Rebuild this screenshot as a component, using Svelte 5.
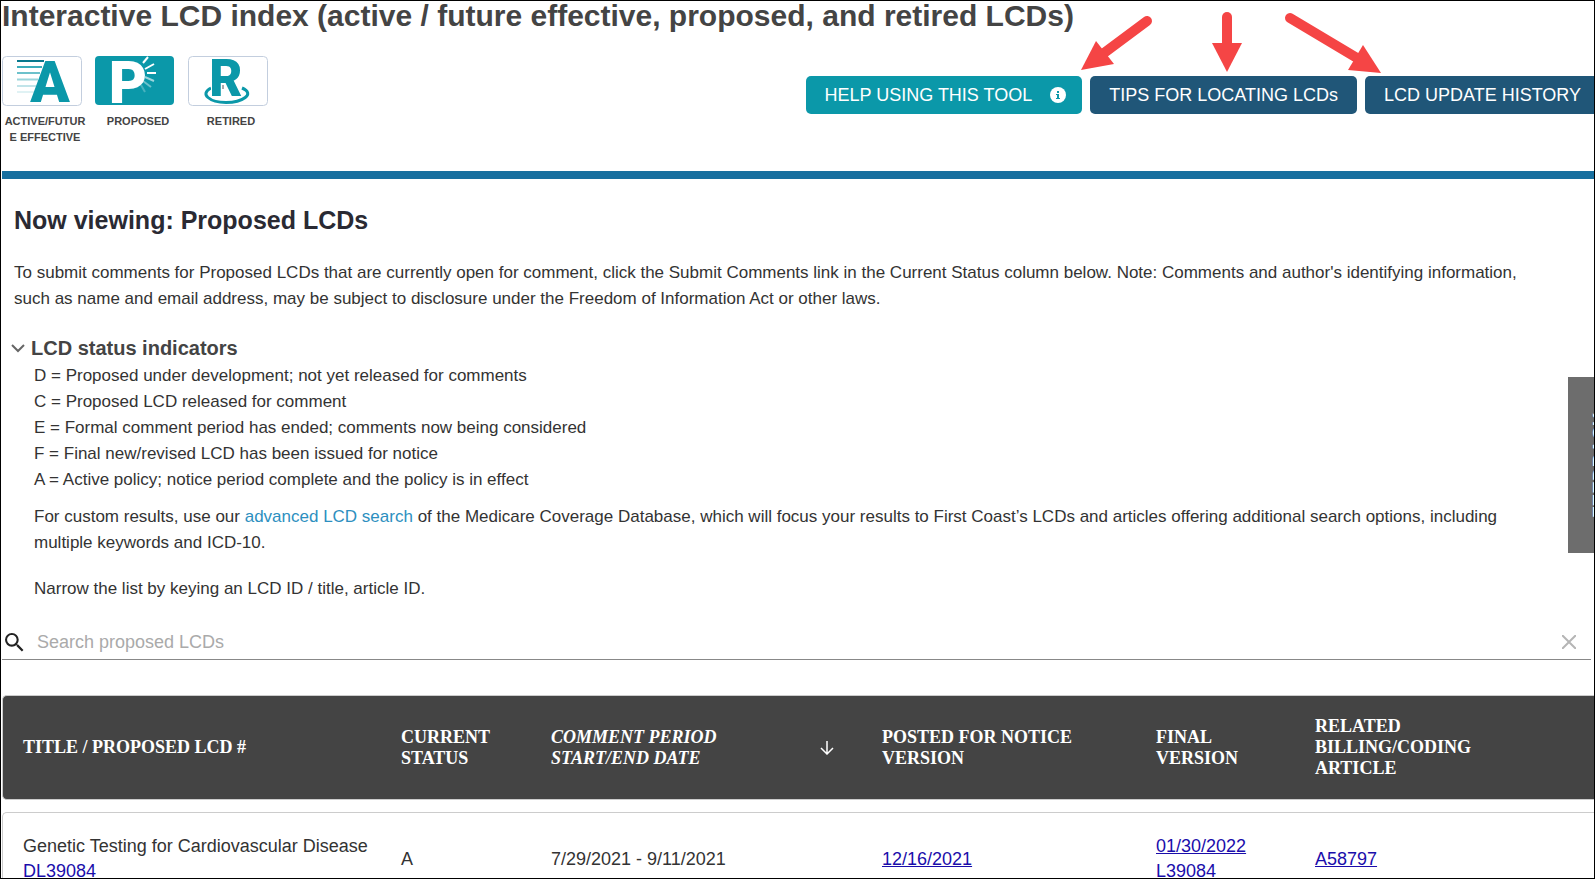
<script lang="ts">
  interface Row {
    title: string
    id: string
    status: string
    period: string
    notice: string
    final: string
    finalId: string
    article: string
  }

  let search = $state('')
  let viewing = $state('proposed')

  const indicators = [
    'D = Proposed under development; not yet released for comments',
    'C = Proposed LCD released for comment',
    'E = Formal comment period has ended; comments now being considered',
    'F = Final new/revised LCD has been issued for notice',
    'A = Active policy; notice period complete and the policy is in effect'
  ]

  const rows: Row[] = [
    {
      title: 'Genetic Testing for Cardiovascular Disease',
      id: 'DL39084',
      status: 'A',
      period: '7/29/2021 - 9/11/2021',
      notice: '12/16/2021',
      final: '01/30/2022',
      finalId: 'L39084',
      article: 'A58797'
    }
  ]

  let shown = $derived(rows.filter((r) => (r.title + r.id + r.article).toLowerCase().includes(search.toLowerCase())))
</script>

<div class="page">
  <h1>Interactive LCD index (active / future effective, proposed, and retired LCDs)</h1>

  <div class="toolbar">
    <nav class="tabs">
      <button class="tab" onclick={() => (viewing = 'active')}>
        <svg class="tile" viewBox="0 0 80 50" aria-hidden="true">
          <rect class="card" x="0.5" y="0.5" width="79" height="49" rx="4" />
          <g stroke="#0b98a9" stroke-width="2">
            <path d="M15 5h27" stroke="#08788d" />
            <path d="M15 11h25" opacity="0.8" />
            <path d="M15 17h23" opacity="0.6" />
            <path d="M15 23.500h21" opacity="0.4" />
            <path d="M15 30h19" opacity="0.25" />
            <path d="M15 36h17" opacity="0.12" />
          </g>
          <text class="letter" x="48" y="46" font-size="58" text-anchor="middle">A</text>
        </svg>
        <span>ACTIVE/FUTUR<br />E EFFECTIVE</span>
      </button>
      <button class="tab" onclick={() => (viewing = 'proposed')}>
        <svg class="tile" viewBox="0 0 80 50" aria-hidden="true">
          <rect x="0" y="0" width="79" height="49" rx="4" fill="#0b98a9" />
          <g stroke="#fff" stroke-width="2">
            <path d="M48 7l5 -6" />
            <path d="M50 13l9 -5" />
            <path d="M52 17h9" />
            <path d="M50 21l9 4" opacity="0.6" />
            <path d="M48 25l8 6" opacity="0.4" />
            <path d="M46 29l4 7" opacity="0.25" />
          </g>
          <text class="letter light" x="33" y="47" font-size="59" text-anchor="middle">P</text>
        </svg>
        <span>PROPOSED</span>
      </button>
      <button class="tab" onclick={() => (viewing = 'retired')}>
        <svg class="tile" viewBox="0 0 80 50" aria-hidden="true">
          <rect class="card" x="0.5" y="0.5" width="79" height="49" rx="4" />
          <path d="M23 32c-12 6 -1 14.500 15 14.500s30 -8.500 16 -14.500" fill="none" stroke="#0b98a9" stroke-width="3" />
          <text class="letter halo" x="38" y="40" font-size="51" text-anchor="middle">R</text>
          <path d="M35 29v4" stroke="#555" />
        </svg>
        <span>RETIRED</span>
      </button>
    </nav>

    <div class="actions">
      <button class="btn teal">
        HELP USING THIS TOOL
        <svg width="16" height="16" viewBox="0 0 16 16" aria-hidden="true">
          <circle cx="8" cy="8" r="8" fill="#fff" />
          <path d="M6 7h3v4h1v1H6v-1h1V8H6zM7 4h2v2H7z" fill="#0b98a9" />
        </svg>
      </button>
      <button class="btn">TIPS FOR LOCATING LCDs</button>
      <button class="btn">LCD UPDATE HISTORY</button>
      <svg class="arrows" width="320" height="70" viewBox="1075 5 320 70" aria-hidden="true">
        <g stroke="#f54545" stroke-width="10" stroke-linecap="round">
          <path d="M1147 21L1104 53" />
          <path d="M1227 17V45" />
          <path d="M1290 18L1357 58" />
        </g>
        <g fill="#f54545">
          <path d="M1081 70L1096 41L1114 64z" />
          <path d="M1227 72L1212 43H1242z" />
          <path d="M1381 73L1363 45L1348 70z" />
        </g>
      </svg>
    </div>
  </div>

  <main>
    <section class="intro">
      <h2>Now viewing: Proposed LCDs</h2>
      <p>
        To submit comments for Proposed LCDs that are currently open for comment, click the Submit Comments link in the
        Current Status column below. Note: Comments and author's identifying information, such as name and email
        address, may be subject to disclosure under the Freedom of Information Act or other laws.
      </p>

      <details open>
        <summary>
          <svg width="14" height="14" viewBox="0 0 14 14" aria-hidden="true">
            <path d="M1 4l6 6l6 -6" fill="none" stroke="#666" stroke-width="2" />
          </svg>
          <h3>LCD status indicators</h3>
        </summary>
        <ul>
          {#each indicators as text}
            <li>{text}</li>
          {/each}
        </ul>
        <p class="custom">
          For custom results, use our <a href="#search">advanced LCD search</a> of the Medicare Coverage Database, which
          will focus your results to First Coast’s LCDs and articles offering additional search options, including
          multiple keywords and ICD-10.
        </p>
        <p class="narrow">Narrow the list by keying an LCD ID / title, article ID.</p>
      </details>
    </section>

    <div class="search">
      <label for="search" aria-label="Search proposed LCDs">
        <svg width="19" height="19" viewBox="3 3 18 18" aria-hidden="true">
          <path
            d="M15.500 14h-.79l-.28-.27A6.471 6.471 0 0 0 16 9.500 6.500 6.500 0 1 0 9.500 16c1.610 0 3.090-.59 4.230-1.570l.27.28v.79l5 4.990L20.490 19l-4.990-5zm-6 0C7.010 14 5 11.990 5 9.500S7.010 5 9.500 5 14 7.010 14 9.500 11.990 14 9.500 14z"
            fill="#222"
          />
        </svg>
      </label>
      <input id="search" type="text" placeholder="Search proposed LCDs" bind:value={search} />
      <button class="clear" aria-label="Clear" onclick={() => (search = '')}>
        <svg width="14" height="14" viewBox="0 0 14 14">
          <path d="M0 0l14 14M14 0L0 14" stroke="#b5b5b5" stroke-width="2" />
        </svg>
      </button>
    </div>

    <table>
      <colgroup>
        <col class="c-title" />
        <col class="c-status" />
        <col class="c-period" />
        <col class="c-notice" />
        <col class="c-final" />
        <col />
      </colgroup>
      <thead>
        <tr>
          <th>TITLE / PROPOSED LCD #</th>
          <th>CURRENT<br />STATUS</th>
          <th>
            <div class="sorted">
              <em>COMMENT PERIOD<br />START/END DATE</em>
              <svg width="14" height="14" viewBox="0 0 14 14" aria-hidden="true">
                <path d="M7 0v13M1 7l6 6l6 -6" fill="none" stroke="#fff" stroke-width="1.500" />
              </svg>
            </div>
          </th>
          <th>POSTED FOR NOTICE<br />VERSION</th>
          <th>FINAL<br />VERSION</th>
          <th>RELATED<br />BILLING/CODING<br />ARTICLE</th>
        </tr>
      </thead>
      <tbody>
        {#each shown as row}
          <tr>
            <td>{row.title}<br /><a class="plain" href="#{row.id}">{row.id}</a></td>
            <td>{row.status}</td>
            <td>{row.period}</td>
            <td><a href="#{row.id}">{row.notice}</a></td>
            <td><a href="#{row.id}">{row.final}</a><br /><a href="#{row.finalId}">{row.finalId}</a></td>
            <td><a href="#{row.article}">{row.article}</a></td>
          </tr>
        {/each}
      </tbody>
    </table>
  </main>

  <button class="feedback">FEEDBACK</button>
</div>

<style>
  :global(body) {
    background: #fff;
  }
  .page {
    position: relative;
    box-sizing: border-box;
    height: 100vh;
    overflow: hidden;
    border: 1px solid #000;
    font-family: "Liberation Sans", Arial, sans-serif;
    font-size: 18px;
    line-height: 26px;
    color: #333;
  }
  h1, h2, h3, p, ul {
    margin: 0;
    padding: 0;
  }
  button {
    border: 0;
    padding: 0;
    background: none;
    font: inherit;
    cursor: pointer;
  }
  h1 {
    padding-left: 1px;
    font-size: 30px;
    line-height: 30px;
    color: #444;
  }
  .toolbar {
    display: flex;
    justify-content: space-between;
    align-items: flex-start;
    height: 115px;
    padding-top: 25px;
    margin-left: 1px;
    border-bottom: 8px solid #176f9f;
  }
  .tabs {
    display: flex;
    align-items: flex-start;
    gap: 7px;
  }
  .tab {
    width: 86px;
    font-size: 11px;
    line-height: 16px;
    color: #444;
    font-weight: bold;
  }
  .tile {
    display: block;
    width: 80px;
    height: 50px;
    margin-bottom: 7px;
  }
  .card {
    fill: #fff;
    stroke: #c3cede;
  }
  .letter {
    font-family: Roboto, "Liberation Sans", sans-serif;
    font-weight: 900;
    fill: #0b98a9;
  }
  .light {
    fill: #fff;
  }
  .halo {
    stroke: #fff;
    stroke-width: 2px;
    paint-order: stroke;
  }
  .actions {
    position: relative;
    display: flex;
    gap: 8px;
    margin: 20px -6px 0 0;
  }
  .btn {
    display: flex;
    align-items: center;
    gap: 18px;
    height: 38px;
    padding: 0 19px;
    border-radius: 5px;
    background: #205678;
    color: #fff;
    white-space: nowrap;
  }
  .teal {
    padding-right: 16px;
    background: #0b98a9;
  }
  .arrows {
    position: absolute;
    right: 205px;
    bottom: 39px;
  }
  .intro {
    padding: 26px 60px 0 13px;
    font-size: 17px;
  }
  h2 {
    margin-bottom: 25px;
    font-size: 25px;
    line-height: 30px;
    color: #2a2a33;
  }
  details {
    margin-top: 22px;
  }
  summary {
    display: flex;
    align-items: center;
    gap: 6px;
    margin-left: -3px;
    list-style: none;
    cursor: pointer;
  }
  h3 {
    font-size: 20px;
    line-height: 28px;
    color: #444;
  }
  ul {
    list-style: none;
    padding: 1px 0 0 20px;
  }
  .custom {
    padding: 11px 0 20px 20px;
  }
  .custom a {
    color: #2d8fc0;
    text-decoration: none;
  }
  .narrow {
    padding-left: 20px;
  }
  .search {
    display: flex;
    align-items: center;
    height: 34px;
    margin: 23px 3px 0 1px;
    border-bottom: 1px solid #888;
  }
  .search label {
    display: flex;
    padding: 0 13px 0 3px;
  }
  .search input {
    flex: 1;
    border: 0;
    padding: 0;
    outline: none;
    background: none;
    font: inherit;
    color: #333;
  }
  .search input::placeholder {
    color: #aaa;
  }
  .clear {
    display: flex;
    padding-right: 15px;
  }
  table {
    width: calc(100% + 4px);
    margin: 23px 0 0 1px;
    table-layout: fixed;
    border-collapse: separate;
    border-spacing: 0 12px;
  }
  .c-title {
    width: 379px;
  }
  .c-status {
    width: 150px;
  }
  .c-period {
    width: 331px;
  }
  .c-notice {
    width: 274px;
  }
  .c-final {
    width: 159px;
  }
  th, td {
    height: 103px;
    padding: 0 0 0 20px;
    border: 1px solid #ccc;
    border-width: 1px 0;
    text-align: left;
    vertical-align: middle;
  }
  th:first-child, td:first-child {
    border-left-width: 1px;
    border-radius: 5px 0 0 5px;
  }
  th {
    background: #444;
    font-family: "Liberation Serif", "Times New Roman", serif;
    line-height: 21px;
    color: #fff;
  }
  td {
    height: 92px;
    line-height: 25px;
  }
  td a {
    color: #1a0dab;
  }
  td a.plain {
    text-decoration: none;
  }
  .sorted {
    display: flex;
    justify-content: space-between;
    align-items: center;
    padding-right: 28px;
  }
  .feedback {
    position: absolute;
    top: 376px;
    right: -38px;
    width: 64px;
    height: 176px;
    background: #6d6d6d;
    color: #fff;
    font-size: 19px;
    font-weight: bold;
    writing-mode: vertical-rl;
    transform: rotate(180deg);
  }
</style>
